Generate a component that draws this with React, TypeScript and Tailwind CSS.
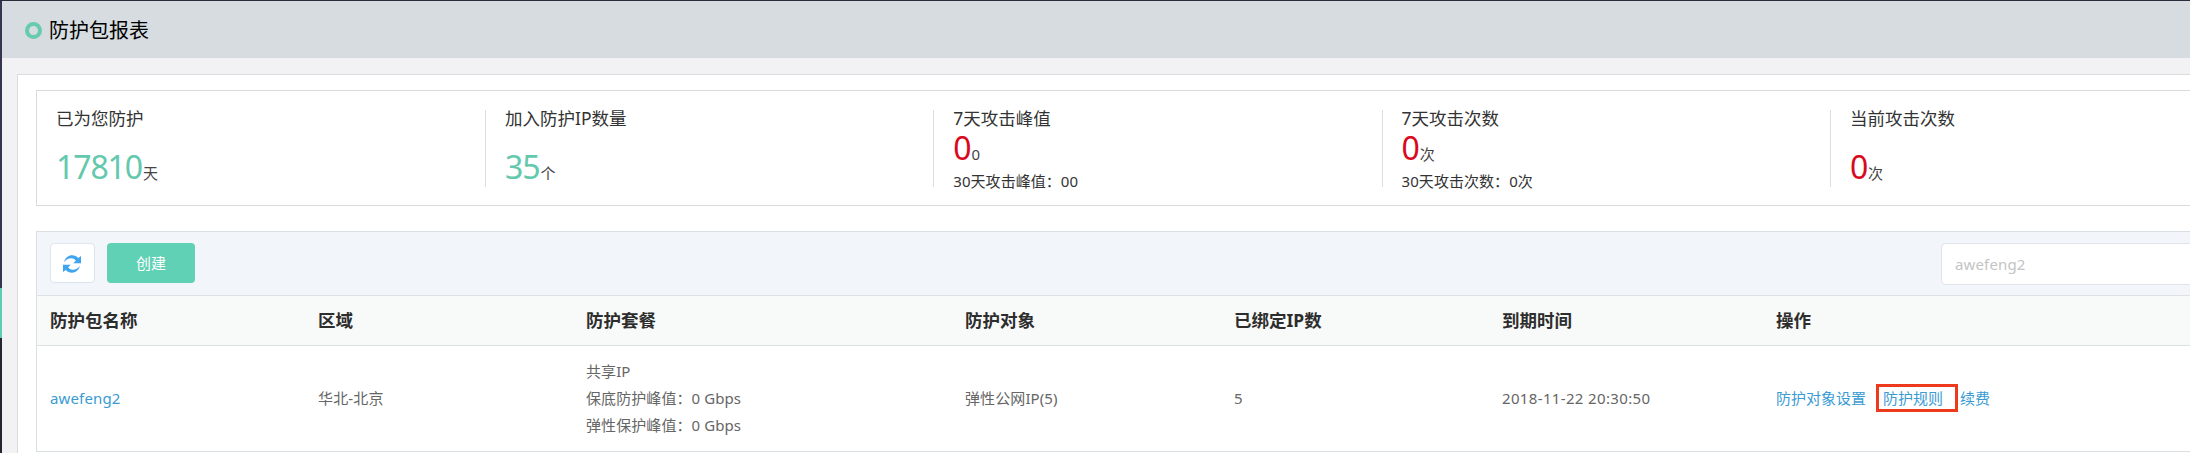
import type { ReactNode } from "react";

type Stat = {
  label: string;
  value: string;
  unit: string;
  danger?: boolean;
  note?: string;
};

const stats: Stat[] = [
  { label: "已为您防护", value: "17810", unit: "天" },
  { label: "加入防护IP数量", value: "35", unit: "个" },
  { label: "7天攻击峰值", value: "0", unit: "0", danger: true, note: "30天攻击峰值：00" },
  { label: "7天攻击次数", value: "0", unit: "次", danger: true, note: "30天攻击次数：0次" },
  { label: "当前攻击次数", value: "0", unit: "次", danger: true },
];

const columns = ["防护包名称", "区域", "防护套餐", "防护对象", "已绑定IP数", "到期时间", "操作"];

const rowGrid = "grid grid-cols-[268px_268px_379px_269px_268px_274px_1fr] items-center pl-[13px]";

function StatCell({ stat, first }: { stat: Stat; first: boolean }) {
  return (
    <div className={`h-[77px] shrink-0 pl-[19px] ${first ? "w-[448px]" : "w-[448.3px] border-l border-[#dcdcdc]"}`}>
      <div className="h-[17px] text-[17.5px] leading-[16px] text-[#333]">{stat.label}</div>
      <div className={`flex h-8 items-baseline leading-8 ${stat.note ? "mt-[5px]" : "mt-[24px]"}`}>
        <span
          className={`text-[32px] tracking-[-1.1px] ${stat.danger ? "text-[#d9091b]" : "text-[#62c9ad]"}`}
        >
          {stat.value}
        </span>
        <span className="ml-px text-[15px] text-[#444]">{stat.unit}</span>
      </div>
      {stat.note && (
        <div className="mt-[7px] h-5 text-[15px] leading-5 tracking-[0.05px] text-[#333]">{stat.note}</div>
      )}
    </div>
  );
}

function RefreshIcon() {
  const arrow = "M1 7C2.500 2.500 5.500.3 9 .3c2.600 0 4.600.9 6.200 2.700L18 1v7.300h-7.800l2.600-2.600C11.800 4 10.300 3.200 8.300 3.200 5.300 3.200 3 4.600 1 7z";
  return (
    <svg className="mt-0.5 mr-px" width="18" height="18" viewBox="0 0 18 18" fill="#3ea5ee">
      <path d={arrow} />
      <path d={arrow} transform="rotate(180 9 9)" />
    </svg>
  );
}

function Link({ children, className = "" }: { children: ReactNode; className?: string }) {
  return (
    <a href="#" className={`text-[#3a9bd3] ${className}`}>
      {children}
    </a>
  );
}

export default function App() {
  return (
    <div className="flex h-[453px] w-full overflow-hidden border-t border-[#2b2b3a] bg-[#f2f2f4] font-['Noto_Sans','Noto_Sans_CJK_SC',sans-serif]">
      <div className="flex w-[2px] shrink-0 flex-col">
        <div className="h-[287px] bg-[#343650]" />
        <div className="h-[50px] bg-[#5ccfb2]" />
        <div className="flex-1 bg-[#262633]" />
      </div>

      <div className="min-w-0 flex-1">
        <header className="flex h-[57px] items-center bg-[#d6dce0] pl-[23px]">
          <span className="mt-px size-[17px] rounded-full border-4 border-[#67cbb0]" />
          <h1 className="mt-0.5 ml-[7px] text-[20px] leading-7 text-black">防护包报表</h1>
        </header>

        <main className="mt-4 ml-[15px] h-[400px] border-t border-l border-[#dadcde] bg-white pt-[15px] pl-[18px]">
          <section className="flex h-[116px] overflow-hidden border border-r-0 border-[#d9dbdd] pt-[19px]">
            {stats.map((stat, i) => (
              <StatCell key={stat.label} stat={stat} first={i === 0} />
            ))}
          </section>

          <section className="mt-[25px] border border-r-0 border-[#d9dfe3]">
            <div className="flex h-[63px] items-start bg-[#f2f5fa] pt-[11px] pl-[13px]">
              <button className="flex h-10 w-[45px] items-center justify-center rounded-[4px] border border-[#dde5ef] bg-white">
                <RefreshIcon />
              </button>
              <button className="ml-3 h-10 w-[88px] rounded-[4px] bg-[#60d1b5] text-[15px] text-white">
                创建
              </button>
              <input
                className="ml-auto h-[42px] w-[249px] rounded-l-[5px] border border-r-0 border-[#e0e4e9] bg-white pl-[13px] text-[15px] tracking-[0.15px] placeholder:text-[#c4c4c4]"
                placeholder="awefeng2"
              />
            </div>

            <div className={`${rowGrid} h-[51px] border-y border-[#dce1e3] bg-[#f8faf9] text-[17.5px] font-bold text-[#2d2d2d]`}>
              {columns.map((name) => (
                <div key={name}>{name}</div>
              ))}
            </div>

            <div className={`${rowGrid} h-[105px] text-[15px] leading-[27px] text-[#666]`}>
              <Link className="tracking-[0.15px]">awefeng2</Link>
              <div className="tracking-[0.15px]">华北-北京</div>
              <div className="tracking-[0.08px]">
                <div>共享IP</div>
                <div>保底防护峰值：0 Gbps</div>
                <div>弹性保护峰值：0 Gbps</div>
              </div>
              <div className="tracking-[0.1px]">弹性公网IP(5)</div>
              <div>5</div>
              <div className="tracking-[0.35px]">2018-11-22 20:30:50</div>
              <div className="flex items-center">
                <Link>防护对象设置</Link>
                <Link className="-mt-px ml-[10px] flex h-7 w-[82px] items-center border-[3px] border-[#ee3a1c] pl-1">
                  防护规则
                </Link>
                <Link className="ml-[2px]">续费</Link>
              </div>
            </div>
          </section>
        </main>
      </div>
    </div>
  );
}
